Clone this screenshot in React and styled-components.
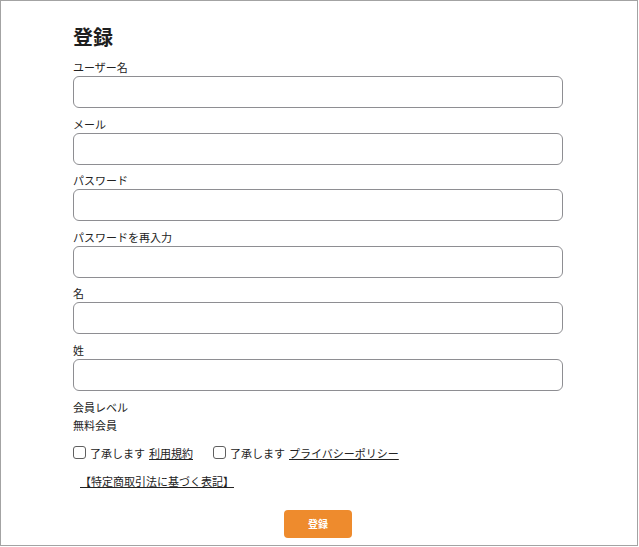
import React from 'react'
import styled, { createGlobalStyle } from 'styled-components'

const GlobalStyle = createGlobalStyle`
  body {
    margin: 0;
    background: #ffffff;
    font-family: "Noto Sans CJK JP", "Noto Sans", sans-serif;
    color: #222222;
  }
`

const Frame = styled.div`
  width: 638px;
  height: 546px;
  box-sizing: border-box;
  border: 1px solid #a3a3a3;
  padding: 24px 0 0 72px;
`

const Form = styled.form`
  width: 490px;
  display: flex;
  flex-direction: column;
`

const Title = styled.h1`
  margin: 0 0 10px;
  font-size: 20px;
  line-height: 24px;
  font-weight: 700;
  color: #1e1e1e;
`

const Field = styled.div`
  display: flex;
  flex-direction: column;
  gap: 1px;
  margin-bottom: 7.6px;
`

const Label = styled.label`
  font-size: 11px;
  line-height: 16px;
  color: #222222;
`

const Input = styled.input`
  height: 32px;
  box-sizing: border-box;
  border: 1px solid #8e8e92;
  border-radius: 6px;
  padding: 0 8px;
  font-size: 12px;
  outline: none;
`

const Text = styled.div`
  font-size: 11px;
  line-height: 18px;
  margin-top: ${(props) => props.top || 0}px;
`

const CheckRow = styled.div`
  display: flex;
  align-items: center;
  gap: 20px;
  margin-top: 10px;
  height: 18px;
`

const CheckItem = styled.label`
  display: flex;
  align-items: center;
  font-size: 11px;
  line-height: 18px;
`

const Box = styled.span`
  width: 11px;
  height: 11px;
  border: 1px solid #5f5f5f;
  border-radius: 3px;
  margin-right: 4px;
`

const Link = styled.a`
  color: #222222;
  text-decoration: underline;
  margin-left: 4px;
`

const LawLink = styled.a`
  display: inline-block;
  align-self: flex-start;
  margin: 10px 0 0 7px;
  font-size: 11px;
  line-height: 18px;
  color: #222222;
  text-decoration: underline;
`

const Submit = styled.button`
  align-self: center;
  margin-top: 20px;
  width: 68px;
  height: 28px;
  border: none;
  border-radius: 4px;
  background: #ee8b2d;
  color: #ffffff;
  font-family: "Noto Sans CJK JP", sans-serif;
  font-size: 10px;
  font-weight: 700;
`

const fields = ['ユーザー名', 'メール', 'パスワード', 'パスワードを再入力', '名', '姓']

const App = () => {
  return (
    <>
      <GlobalStyle />
      <Frame>
        <Form onSubmit={(e) => e.preventDefault()}>
          <Title>登録</Title>
          {fields.map((name) => (
            <Field key={name}>
              <Label>{name}</Label>
              <Input type={name.startsWith('パスワード') ? 'password' : 'text'} />
            </Field>
          ))}
          <Text top={-1}>会員レベル</Text>
          <Text>無料会員</Text>
          <CheckRow>
            <CheckItem>
              <Box />
              了承します<Link>利用規約</Link>
            </CheckItem>
            <CheckItem>
              <Box />
              了承します<Link>プライバシーポリシー</Link>
            </CheckItem>
          </CheckRow>
          <LawLink>【特定商取引法に基づく表記】</LawLink>
          <Submit type="submit">登録</Submit>
        </Form>
      </Frame>
    </>
  )
}

export default App
